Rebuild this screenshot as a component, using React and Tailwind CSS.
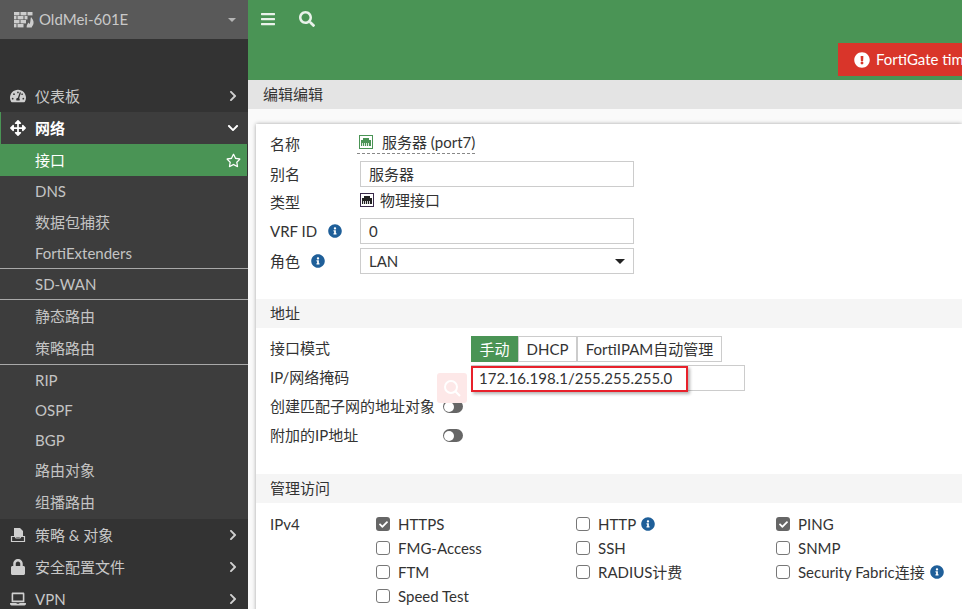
import React from "react";
import { FaTachometerAlt, FaArrowsAlt, FaBars, FaSearch, FaLock, FaLaptop, FaChevronRight, FaChevronDown, FaRegStar, FaExclamationCircle, FaInfoCircle, FaCheck } from "react-icons/fa";

const FONT = "font-['Lato','Noto_Sans_CJK_SC',sans-serif]";

function Info({ className = "" }) {
  return <FaInfoCircle className={"text-[#1f5f99] text-[14px] shrink-0 " + className} />;
}

function PortIcon({ fill, stroke }) {
  return (
    <svg width="14" height="14" viewBox="0 0 14 14" className="shrink-0">
      <rect x="0.5" y="0.5" width="13" height="13" fill="#fff" stroke={stroke} />
      <path d="M2 11V5h2V3h6v2h2v6z" fill={fill} />
      <path d="M3.500 8v3M5.500 8v3M7.500 8v3M9.500 8v3" stroke="#fff" strokeWidth="0.8" />
    </svg>
  );
}

function WallIcon() {
  return (
    <svg width="20" height="16" viewBox="0 0 20 16" className="shrink-0">
      <g fill="#cdcdcd">
        <rect x="0" y="0" width="5.500" height="3.400" />
        <rect x="6.500" y="0" width="6" height="3.400" />
        <rect x="13.500" y="0" width="5" height="3.400" />
        <rect x="0" y="4" width="2.500" height="3.400" />
        <rect x="3.500" y="4" width="6" height="3.400" />
        <rect x="10.500" y="4" width="3" height="3.400" />
        <rect x="0" y="8" width="5.500" height="3.400" />
        <rect x="6.500" y="8" width="5.500" height="3.400" />
        <rect x="0" y="12" width="2.500" height="3.400" />
        <rect x="3.500" y="12" width="6" height="3.400" />
        <path d="M17 5c1.500 2 3 4 2.500 6.500-.300 1.700-1.500 2.700-1.800 4h-5c-.300-2 .8-3.800 1.900-5 .2.800.5 1.200 1 1.500C16.800 9.500 16.200 7.500 17 5z" />
      </g>
    </svg>
  );
}

function PolicyIcon() {
  return (
    <svg width="16" height="16" viewBox="0 0 16 16" className="text-[#cfcfcf]">
      <path d="M4 1h6l3 3v6H4z" fill="currentColor" />
      <path d="M1.500 9.500h3.500l1 1.500h4l1-1.500h3.500v5h-13z" fill="none" stroke="currentColor" strokeWidth="1.200" />
    </svg>
  );
}

function NavTop({ icon, label }) {
  return (
    <div className="h-8 shrink-0 flex items-center text-[#c8c8c8] bg-[#333333]">
      <span className="w-[35px] pl-[10px] flex items-center text-[16px] text-[#cfcfcf]">{icon}</span>
      <span className="flex-1 text-[15px]">{label}</span>
      <FaChevronRight className="text-[12px] mr-[9px] text-[#d0d0d0]" />
    </div>
  );
}

function Sub({ h, children, line }) {
  return (
    <div className={`${h} shrink-0 flex items-center pl-[35px] text-[15px] text-[#c4c4c4] ${line ? "border-b border-[#a9a9a9]" : ""}`}>
      {children}
    </div>
  );
}

function Sidebar() {
  return (
    <aside className="w-[248px] shrink-0 h-full bg-[#333333] flex flex-col overflow-hidden">
      <div className="h-[39px] shrink-0 flex items-center pl-[14px] pr-[10px] bg-[#595959]">
        <WallIcon />
        <span className="ml-[5px] flex-1 text-[15px] text-[#c9c9c9]">OldMei-601E</span>
        <span className="w-0 h-0 border-x-[4px] border-x-transparent border-t-[4px] border-t-[#b5b5b5] mr-[2px]" />
      </div>
      <div className="h-[41px] shrink-0" />
      <NavTop icon={<FaTachometerAlt />} label="仪表板" />
      <div className="h-8 shrink-0 flex items-center bg-[#3d3d3d] border-l border-[#4a9455] text-white">
        <span className="w-[34px] pl-[9px] flex items-center text-[16px]"><FaArrowsAlt /></span>
        <span className="flex-1 text-[15px] font-bold">网络</span>
        <FaChevronDown className="text-[12px] mr-[9px]" />
      </div>
      <div className="h-8 shrink-0 flex items-center justify-between bg-[#4a9455] text-white pl-[35px] pr-[6px] mr-[1px] text-[15px]">
        <span>接口</span>
        <FaRegStar className="text-[15px]" />
      </div>
      <div className="bg-[#3d3d3d] flex flex-col shrink-0">
        <Sub h="h-[30px]">DNS</Sub>
        <Sub h="h-[32px]">数据包捕获</Sub>
        <Sub h="h-[31px]" line>FortiExtenders</Sub>
        <Sub h="h-[31px]" line>SD-WAN</Sub>
        <Sub h="h-[33px]">静态路由</Sub>
        <Sub h="h-[32px]" line>策略路由</Sub>
        <Sub h="h-[30px]">RIP</Sub>
        <Sub h="h-[30px]">OSPF</Sub>
        <Sub h="h-[30px]">BGP</Sub>
        <Sub h="h-[31px]">路由对象</Sub>
        <Sub h="h-[33px]">组播路由</Sub>
      </div>
      <NavTop icon={<PolicyIcon />} label="策略 & 对象" />
      <NavTop icon={<FaLock />} label="安全配置文件" />
      <NavTop icon={<FaLaptop />} label="VPN" />
    </aside>
  );
}

function Input({ children, w = "w-[274px]", arrow, pl = "pl-[8px]" }) {
  return (
    <div className={`${w} h-[26px] shrink-0 border border-[#cccccc] bg-white flex items-center justify-between ${pl} pr-[8px] text-[15px] text-[#333]`}>
      <span>{children}</span>
      {arrow && <span className="w-0 h-0 border-x-[5px] border-x-transparent border-t-[5px] border-t-[#222]" />}
    </div>
  );
}

function Row({ label, h, children, mt = "", up }) {
  return (
    <div className={`flex items-center pl-[14px] ${h} ${mt}`}>
      <div className={`w-[90px] flex items-center gap-[11px] shrink-0 text-[15px] text-[#333] ${up ? "-mt-[2px]" : ""}`}>{label}</div>
      {children}
    </div>
  );
}

function SectionHead({ children }) {
  return <div className="h-[29px] flex items-center pl-[14px] bg-[#f5f5f5] text-[15px] text-[#333]">{children}</div>;
}

function Check({ checked, label, extra }) {
  return (
    <div className="w-[200px] h-6 flex items-center text-[15px] text-[#333]">
      {checked ? (
        <span className="w-[14px] h-[14px] rounded-[3px] bg-[#666666] text-white flex items-center justify-center">
          <FaCheck className="text-[9px]" />
        </span>
      ) : (
        <span className="w-[14px] h-[14px] rounded-[3px] border border-[#777777] bg-white" />
      )}
      <span className="ml-[8px]">{label}</span>
      {extra && <Info className="ml-[5px]" />}
    </div>
  );
}

function Toggle() {
  return (
    <span className="w-[20px] h-[13px] rounded-full bg-[#666666] flex items-center pl-[1px]">
      <span className="w-[10px] h-[10px] rounded-full bg-white" />
    </span>
  );
}

function ModeBtn({ children, active, w }) {
  return (
    <div className={`${w} h-[26px] shrink-0 flex items-center justify-center text-[15px] ${active ? "bg-[#4a9455] text-white" : "bg-white border border-[#cccccc] text-[#333]"}`}>
      {children}
    </div>
  );
}

function Main() {
  return (
    <main className="flex-1 min-w-0 h-full bg-[#fafafa] flex flex-col overflow-hidden">
      <div className="h-[80px] shrink-0 bg-[#4a9455] relative">
        <div className="h-[38px] flex items-center pl-[12px] gap-[23px] text-[#e9f2ea] text-[16px]">
          <FaBars />
          <FaSearch />
        </div>
        <div className="absolute left-[590px] top-[43px] right-0 h-[33px] bg-[#d9352a] flex items-center pl-[16px] text-white text-[15px] whitespace-nowrap overflow-hidden">
          <FaExclamationCircle className="text-[16px] mr-[6px] shrink-0" />
          <span>FortiGate time</span>
        </div>
      </div>
      <div className="h-[29px] shrink-0 bg-[#e4e4e4] flex items-center pl-[15px] text-[15px] text-[#333]">编辑编辑</div>
      <div className="pt-[15px] pl-[8px] flex-1 min-h-0">
        <div className="bg-white shadow-[0_0_4px_rgba(0,0,0,0.35)] h-[520px] relative">
          <div className="pt-[6px]">
            <Row label="名称" h="h-[30px]" up>
              <span className="flex items-center border-b border-dashed border-[#888] h-[22px] pl-[2px] -ml-[3px] -mt-[5px] text-[15px] text-[#333]">
                <PortIcon fill="#4a9455" stroke="#4a9455" />
                <span className="ml-[9px]">服务器 (port7)</span>
              </span>
            </Row>
            <Row label="别名" h="h-[26px]" mt="mt-[1px]"><Input>服务器</Input></Row>
            <Row label="类型" h="h-[31px]">
              <span className="flex items-center -mt-[5px] text-[15px] text-[#333]">
                <PortIcon fill="#222" stroke="#3a2a4a" />
                <span className="ml-[6px]">物理接口</span>
              </span>
            </Row>
            <Row label={<>VRF ID<Info /></>} h="h-[26px]"><Input>0</Input></Row>
            <Row label={<>角色<Info /></>} h="h-[26px]" mt="mt-[4px]"><Input arrow>LAN</Input></Row>
          </div>
          <div className="h-[25px]" />
          <SectionHead>地址</SectionHead>
          <div className="pt-[8px]">
            <div className="flex items-center pl-[14px] h-[26px]">
              <div className="w-[201px] shrink-0 -mt-[2px] text-[15px] text-[#333]">接口模式</div>
              <ModeBtn active w="w-[47px]">手动</ModeBtn>
              <ModeBtn w="w-[59px]">DHCP</ModeBtn>
              <ModeBtn w="w-[145px]">FortiIPAM自动管理</ModeBtn>
            </div>
            <div className="flex items-center pl-[14px] h-[26px] mt-[3px]">
              <div className="w-[201px] shrink-0 -mt-[2px] text-[15px] text-[#333]">IP/网络掩码</div>
              <Input pl="pl-[7px]">172.16.198.1/255.255.255.0</Input>
            </div>
            <div className="flex items-center pl-[14px] h-[29px] mt-[1px]">
              <div className="w-[173px] shrink-0 text-[15px] text-[#333] whitespace-nowrap">创建匹配子网的地址对象</div>
              <Toggle />
            </div>
            <div className="flex items-center pl-[14px] h-[29px]">
              <div className="w-[173px] shrink-0 text-[15px] text-[#333]">附加的IP地址</div>
              <Toggle />
            </div>
          </div>
          <div className="absolute left-[181px] top-[249px] w-[30px] h-[30px] rounded-[3px] bg-[#fde8e8] flex items-center justify-center">
            <svg width="20" height="20" viewBox="0 0 20 20" fill="none" stroke="#ffffff" strokeWidth="2">
              <circle cx="9" cy="9" r="6" />
              <path d="M13.500 13.500l4.500 4.500" />
            </svg>
          </div>
          <div className="absolute left-[215px] top-[242px] w-[217px] h-[26px] border-2 border-[#e8212b] shadow-[2px_2px_3px_rgba(0,0,0,0.3)]" />
          <div className="h-[24px]" />
          <SectionHead>管理访问</SectionHead>
          <div className="flex pl-[14px] pt-[9px]">
            <div className="w-[106px] h-6 shrink-0 flex items-center text-[15px] text-[#333]">IPv4</div>
            <div className="flex flex-col shrink-0">
              <Check checked label="HTTPS" />
              <Check label="FMG-Access" />
              <Check label="FTM" />
              <Check label="Speed Test" />
            </div>
            <div className="flex flex-col shrink-0">
              <Check label="HTTP" extra />
              <Check label="SSH" />
              <Check label="RADIUS计费" />
            </div>
            <div className="flex flex-col shrink-0">
              <Check checked label="PING" />
              <Check label="SNMP" />
              <Check label="Security Fabric连接" extra />
            </div>
          </div>
        </div>
      </div>
    </main>
  );
}

export default function App() {
  return (
    <div className={`${FONT} w-[962px] h-[609px] flex overflow-hidden`}>
      <Sidebar />
      <Main />
    </div>
  );
}
